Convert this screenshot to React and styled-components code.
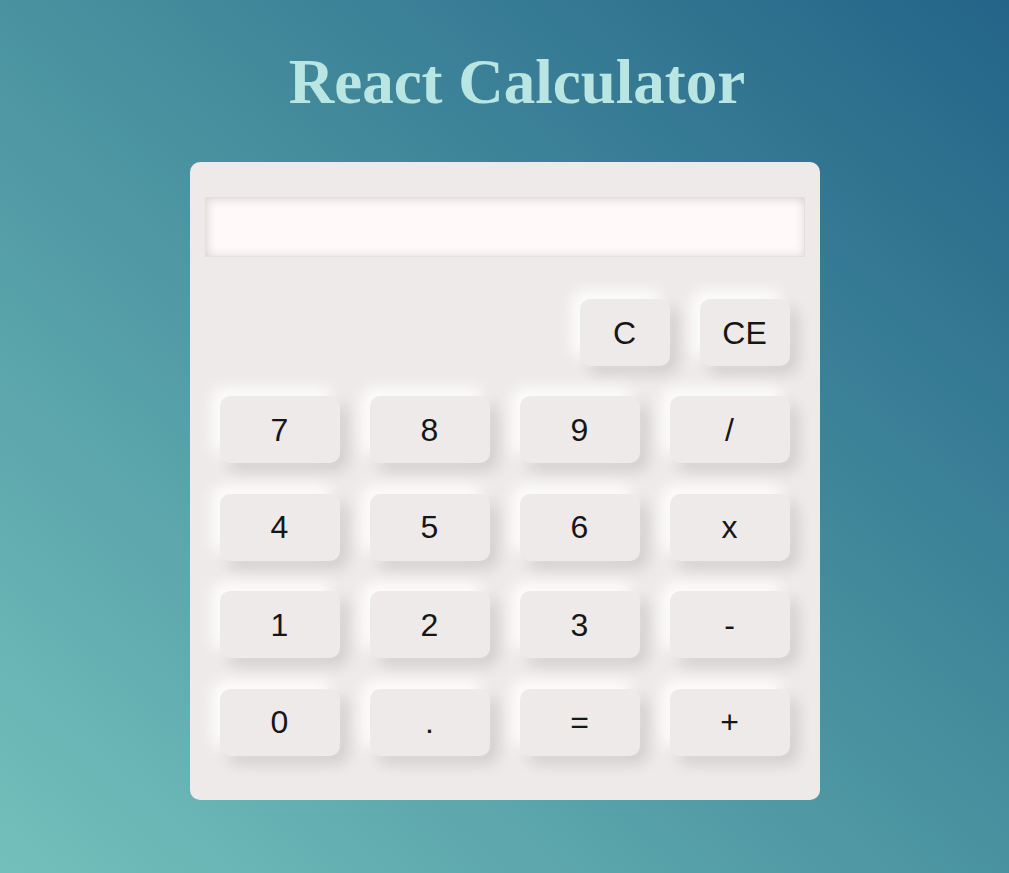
import React, { useState } from "react";
import styled, { createGlobalStyle } from "styled-components";

const GlobalStyle = createGlobalStyle`
  html, body {
    margin: 0;
    padding: 0;
  }
  body {
    min-height: 873px;
    background: linear-gradient(to top right, #74c0bc 0%, #4a92a0 50%, #236488 100%);
    font-family: "Liberation Sans", Arial, sans-serif;
  }
`;

const Page = styled.div`
  min-height: 873px;
  display: flex;
  flex-direction: column;
  align-items: center;
  padding-top: 47px;
  box-sizing: border-box;
`;

const Title = styled.h1`
  margin: 0 0 44px;
  padding-left: 25px;
  font-family: "Liberation Serif", "Times New Roman", serif;
  font-size: 63px;
  font-weight: bold;
  line-height: 71px;
  color: #b9e5e2;
`;

const Card = styled.div`
  width: 630px;
  box-sizing: border-box;
  background: #efeaea;
  border-radius: 10px;
  padding: 35px 30px 44px;
`;

const Display = styled.input`
  display: block;
  width: 600px;
  height: 60px;
  box-sizing: border-box;
  margin: 0 -15px 42px;
  border: 1px solid #e4dede;
  background: #fff9f9;
  box-shadow: inset 3px 3px 9px rgba(0, 0, 0, 0.1), inset -3px -3px 9px rgba(0, 0, 0, 0.06);
  font-family: "Liberation Sans", Arial, sans-serif;
  font-size: 28px;
  text-align: right;
  padding: 0 14px;
  outline: none;
`;

const ControlRow = styled.div`
  display: flex;
  justify-content: flex-end;
  gap: 30px;
  margin-bottom: 30px;
`;

const Keys = styled.div`
  display: grid;
  grid-template-columns: repeat(4, 120px);
  grid-auto-rows: 67px;
  column-gap: 30px;
  row-gap: 30.6px;
`;

const Key = styled.button`
  width: ${(p) => (p.$small ? "90px" : "120px")};
  height: 67px;
  border: none;
  border-radius: 10px;
  background: #efeaea;
  color: #161616;
  font-family: "Liberation Sans", Arial, sans-serif;
  font-size: 32px;
  padding-top: 2px;
  cursor: pointer;
  box-shadow: -8px -8px 15px rgba(255, 255, 255, 0.9), 8px 8px 15px rgba(0, 0, 0, 0.12);

  &:active {
    box-shadow: inset 3px 3px 8px rgba(0, 0, 0, 0.12);
  }
`;

const rows = ["7", "8", "9", "/", "4", "5", "6", "x", "1", "2", "3", "-", "0", ".", "=", "+"];

export default function App() {
  const [value, setValue] = useState("");

  const press = (k) => {
    if (k === "=") {
      try {
        // eslint-disable-next-line no-new-func
        setValue(String(Function(`return (${value.replace(/x/g, "*")})`)()));
      } catch (e) {
        setValue("Error");
      }
      return;
    }
    setValue((v) => v + k);
  };

  return (
    <>
      <GlobalStyle />
      <Page>
        <Title>React Calculator</Title>
        <Card>
          <Display value={value} readOnly />
          <ControlRow>
            <Key $small onClick={() => setValue("")}>C</Key>
            <Key $small onClick={() => setValue((v) => v.slice(0, -1))}>CE</Key>
          </ControlRow>
          <Keys>
            {rows.map((k) => (
              <Key key={k} onClick={() => press(k)}>
                {k}
              </Key>
            ))}
          </Keys>
        </Card>
      </Page>
    </>
  );
}
